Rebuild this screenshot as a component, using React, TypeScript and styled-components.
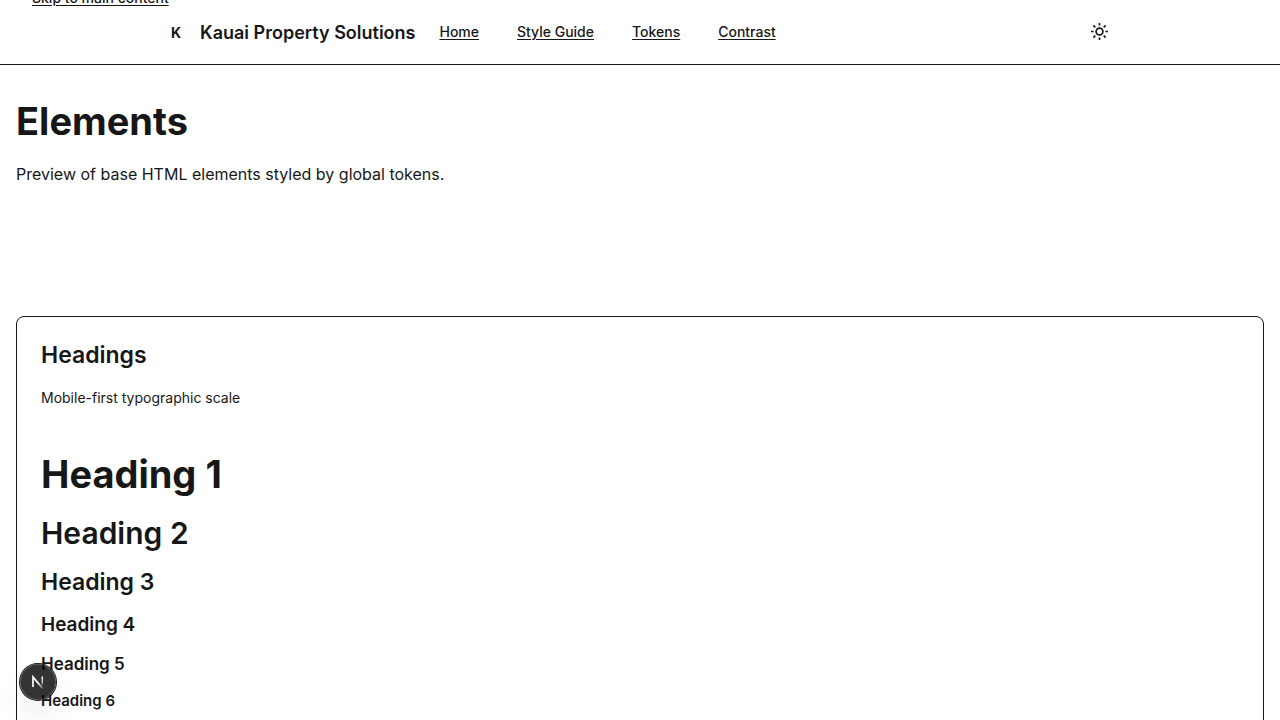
import React from "react";
import styled, { createGlobalStyle } from "styled-components";

const GlobalStyle = createGlobalStyle`
  *, *::before, *::after { box-sizing: border-box; }
  body {
    margin: 0;
    background: #ffffff;
    color: #171717;
    font-family: Inter, "Liberation Sans", sans-serif;
    font-size: 16px;
    line-height: 27px;
    -webkit-font-smoothing: antialiased;
  }
  h1, h2, h3, h4, h5, h6, p { margin: 0; }
`;

const TextLink = styled.a`
  color: inherit;
  font-size: 14px;
  line-height: 20px;
  font-weight: 500;
  text-decoration: underline;
  text-underline-offset: 2px;
`;

const SkipLink = styled(TextLink)`
  position: absolute;
  top: -12px;
  left: 32px;
  z-index: 2;

  &:focus {
    top: 8px;
    background: #ffffff;
  }
`;

const Header = styled.header`
  border-bottom: 1px solid #171717;
`;

const HeaderInner = styled.div`
  display: flex;
  align-items: center;
  gap: 24px;
  max-width: 960px;
  height: 64px;
  margin: 0 auto;
`;

const Brand = styled.div`
  display: flex;
  align-items: center;
  gap: 8px;
  font-size: 18px;
  font-weight: 600;
  white-space: nowrap;
`;

const BrandMark = styled.span`
  width: 32px;
  font-size: 14px;
  font-weight: 700;
  text-align: center;
`;

const Nav = styled.nav`
  display: flex;
  gap: 38px;
  white-space: nowrap;
`;

const ThemeButton = styled.button`
  display: grid;
  place-items: center;
  width: 40px;
  height: 40px;
  margin-left: auto;
  padding: 0;
  border: 0;
  background: transparent;
  color: inherit;
  cursor: pointer;
`;

const Main = styled.main`
  padding: 32px 16px;
`;

const Intro = styled.header`
  display: grid;
  gap: 16px;
  padding-bottom: 128px;
`;

const H1 = styled.h1`
  font-size: 38px;
  line-height: 48px;
  font-weight: 700;
`;

const H2 = styled.h2`
  font-size: 30px;
  line-height: 38px;
  font-weight: 600;
`;

const H3 = styled.h3`
  font-size: 23px;
  line-height: 28px;
  font-weight: 600;
`;

const H4 = styled.h4`
  font-size: 19px;
  line-height: 25px;
  font-weight: 600;
`;

const H5 = styled.h5`
  font-size: 17px;
  line-height: 22px;
  font-weight: 600;
`;

const H6 = styled.h6`
  font-size: 15px;
  line-height: 19px;
  font-weight: 600;
`;

const Card = styled.section`
  padding: 24px;
  border: 1px solid #171717;
  border-radius: 8px;
`;

const CardHeader = styled.header`
  display: grid;
  gap: 16px;
  padding-bottom: 40px;
`;

const CardNote = styled.p`
  font-size: 14px;
  line-height: 25px;
`;

const Scale = styled.div`
  display: grid;
  gap: 16px;
`;

const DevButton = styled.button`
  position: fixed;
  left: 20px;
  bottom: 20px;
  display: grid;
  place-items: center;
  width: 36px;
  height: 36px;
  padding: 0;
  border: 0;
  border-radius: 50%;
  background: rgba(0, 0, 0, 0.8);
  color: #ffffff;
  box-shadow:
    0 0 0 1px #171717,
    inset 0 0 0 1px rgba(255, 255, 255, 0.14),
    0 16px 32px -8px rgba(0, 0, 0, 0.24);
  cursor: pointer;
`;

const links = ["Home", "Style Guide", "Tokens", "Contrast"];

function SunIcon() {
  return (
    <svg width="20" height="20" viewBox="0 0 20 20" fill="none" stroke="currentColor" strokeWidth="1.7" aria-hidden="true">
      <circle cx="9.5" cy="9.5" r="3.4" />
      <path d="M9.5 1v2.6M9.5 15.4V18M1 9.5h2.6M15.4 9.5H18M3.4 3.4l1.9 1.9M13.7 13.7l1.9 1.9M3.4 15.6l1.9-1.9M13.7 5.3l1.9-1.9" />
    </svg>
  );
}

function NextMark() {
  return (
    <svg width="14" height="14" viewBox="0 0 14 14" fill="none" aria-hidden="true">
      <defs>
        <linearGradient id="stem" x1="0" y1="1" x2="0" y2="11" gradientUnits="userSpaceOnUse">
          <stop stopColor="#fff" />
          <stop offset="0.6" stopColor="#fff" stopOpacity="0.7" />
          <stop offset="1" stopColor="#fff" stopOpacity="0" />
        </linearGradient>
        <linearGradient id="diagonal" x1="7" y1="8" x2="13" y2="15" gradientUnits="userSpaceOnUse">
          <stop stopColor="#fff" />
          <stop offset="1" stopColor="#fff" stopOpacity="0" />
        </linearGradient>
      </defs>
      <path d="M2 12V2L11.6 13.4" stroke="url(#diagonal)" strokeWidth="1.7" />
      <path d="M11.3 1.4v9.2" stroke="url(#stem)" strokeWidth="1.5" />
    </svg>
  );
}

export default function App() {
  return (
    <>
      <GlobalStyle />
      <SkipLink href="#main">Skip to main content</SkipLink>
      <Header>
        <HeaderInner>
          <Brand>
            <BrandMark>K</BrandMark>
            <span>Kauai Property Solutions</span>
          </Brand>
          <Nav aria-label="Primary">
            {links.map((label) => (
              <TextLink key={label} href="#">{label}</TextLink>
            ))}
          </Nav>
          <ThemeButton type="button" aria-label="Toggle theme">
            <SunIcon />
          </ThemeButton>
        </HeaderInner>
      </Header>
      <Main id="main">
        <Intro>
          <H1>Elements</H1>
          <p>Preview of base HTML elements styled by global tokens.</p>
        </Intro>
        <Card>
          <CardHeader>
            <H3 as="h2">Headings</H3>
            <CardNote>Mobile-first typographic scale</CardNote>
          </CardHeader>
          <Scale>
            <H1 as="h2">Heading 1</H1>
            <H2>Heading 2</H2>
            <H3>Heading 3</H3>
            <H4>Heading 4</H4>
            <H5>Heading 5</H5>
            <H6>Heading 6</H6>
          </Scale>
        </Card>
      </Main>
      <DevButton type="button" aria-label="Open developer tools">
        <NextMark />
      </DevButton>
    </>
  );
}
